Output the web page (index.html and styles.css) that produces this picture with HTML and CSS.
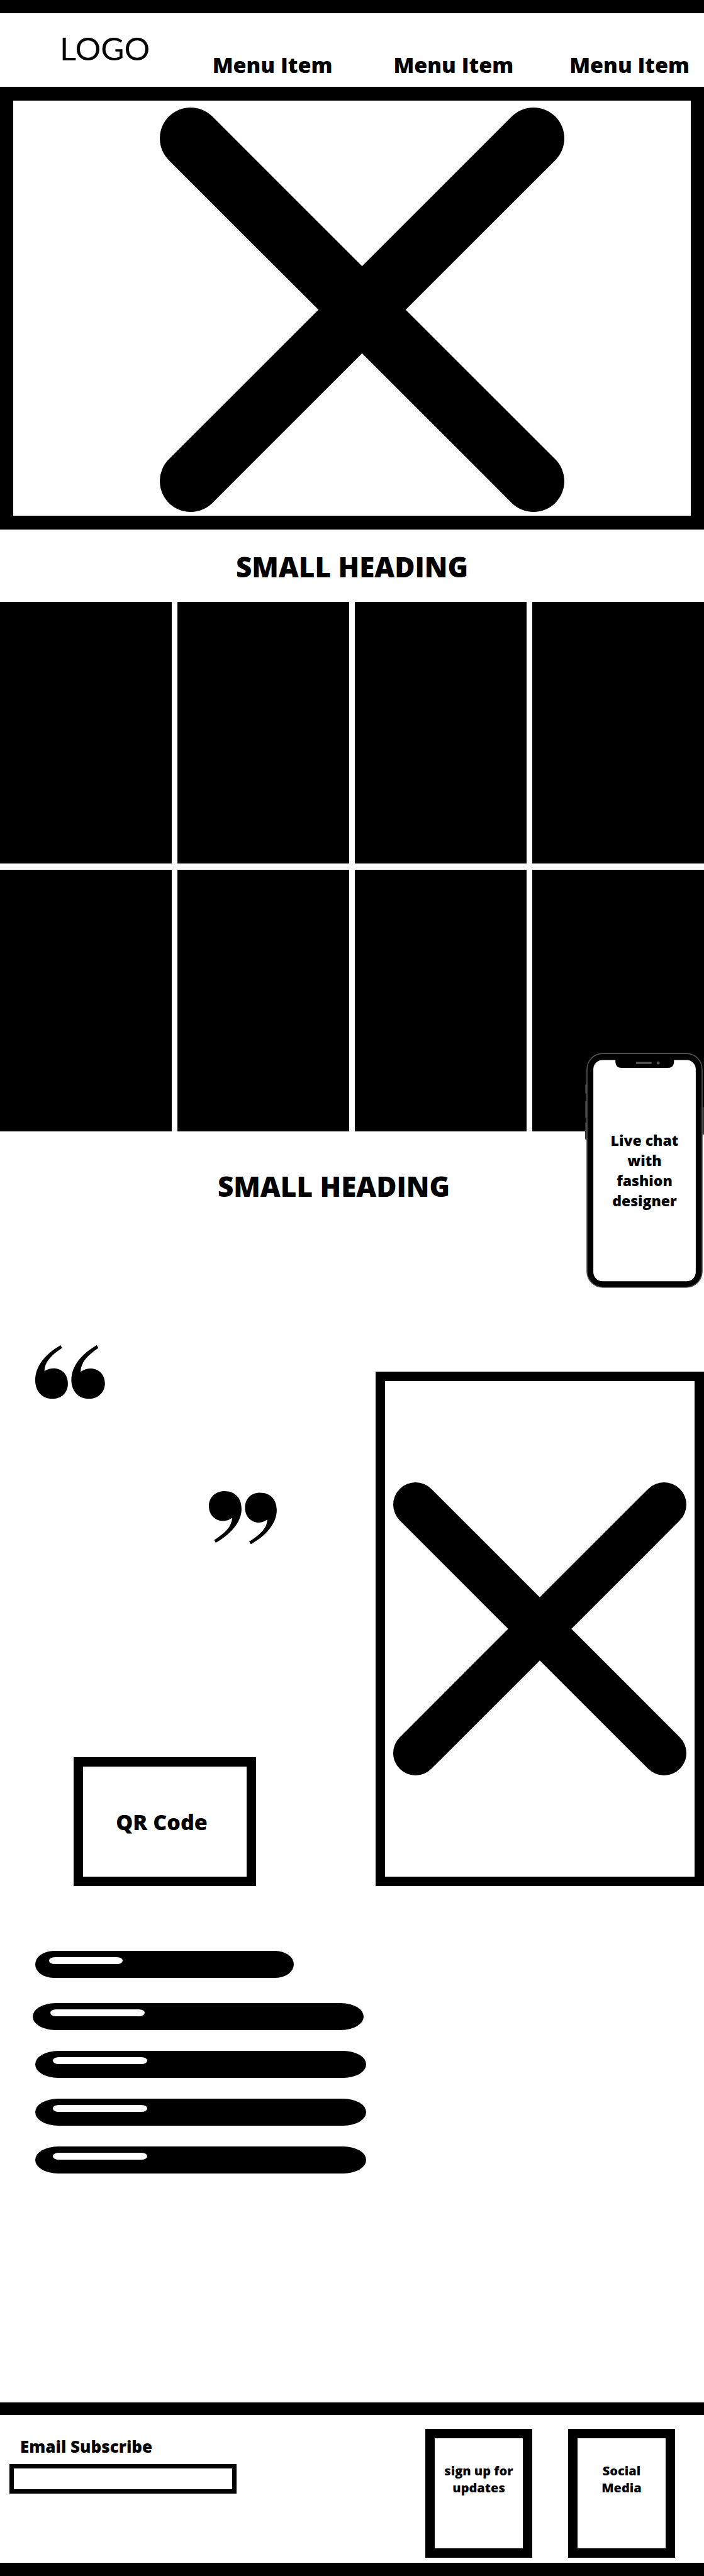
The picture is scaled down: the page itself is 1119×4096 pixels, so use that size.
FILE: index.html
```html
<!DOCTYPE html>
<html lang="en">
<head>
<meta charset="utf-8">
<meta name="viewport" content="width=device-width, initial-scale=1">
<title>Fashion store wireframe</title>
<link rel="stylesheet" href="styles.css">
</head>
<body>
<header class="site-header">
  <a class="logo" href="#">LOGO</a>
  <nav class="menu">
    <a class="menu-item" href="#">Menu Item</a>
    <a class="menu-item" href="#">Menu Item</a>
    <a class="menu-item" href="#">Menu Item</a>
  </nav>
</header>

<main>
  <section class="hero">
    <svg class="hero-cross" viewBox="0 0 643 643" role="img" aria-label="Hero image placeholder">
      <path d="M49 49 594 594M594 49 49 594" stroke="#000" stroke-width="98" stroke-linecap="round"/>
    </svg>
  </section>

  <h2 class="heading">SMALL HEADING</h2>

  <section class="gallery">
    <div class="tile"></div>
    <div class="tile"></div>
    <div class="tile"></div>
    <div class="tile"></div>
    <div class="tile"></div>
    <div class="tile"></div>
    <div class="tile"></div>
    <div class="tile"></div>
    <button class="chat" type="button">
      <svg class="chat-phone" viewBox="105 69 693 1369" aria-hidden="true">
        <g fill="#333">
          <rect x="105" y="252" width="14" height="54" rx="5"/>
          <rect x="105" y="349" width="14" height="100" rx="5"/>
          <rect x="105" y="474" width="14" height="100" rx="5"/>
          <rect x="784" y="384" width="14" height="162" rx="5"/>
        </g>
        <rect x="116" y="72" width="671" height="1363" rx="92" fill="#000" stroke="#555" stroke-width="6"/>
        <rect x="153" y="110" width="597" height="1290" rx="54" fill="#fff"/>
        <path d="M282 108H623V124Q620 156 588 156H317Q285 156 282 124Z" fill="#000"/>
        <rect x="402" y="121" width="91" height="12" rx="3" fill="#555"/>
        <circle cx="531" cy="127" r="9" fill="#555"/>
      </svg>
      <span class="chat-text">Live chat with fashion designer</span>
    </button>
  </section>

  <h2 class="heading heading-second">SMALL HEADING</h2>

  <section class="story">
    <div class="story-side">
      <svg class="quote quote-open" viewBox="0 0 111 85" aria-hidden="true">
        <g transform="scale(.3657 .2731) translate(-154 -93)">
          <path d="M264 93 271 109C222 152 194 194 194 243C242 205 296 239 296 315C296 370 267 405 228 405C184 405 154 359 154 297C154 213 199 144 264 93Z"/>
          <path d="M421 93 429 109C380 152 352 196 351 248C400 203 457 242 457 315C457 367 427 405 386 405C343 405 311 359 311 297C311 213 356 144 421 93Z"/>
        </g>
      </svg>
      <svg class="quote quote-close" viewBox="0 0 108 84" aria-hidden="true">
        <g transform="scale(.3657 .2731) translate(-909 -942)">
          <path d="M939 1242 932 1227C985 1182 1009 1144 1010 1098C968 1140 909 1104 909 1030C909 979 937 942 977 942C1023 942 1051 982 1051 1046C1051 1121 1005 1192 939 1242Z"/>
          <path d="M1092 1251 1084 1236C1138 1191 1162 1153 1163 1108C1121 1150 1066 1111 1066 1040C1066 987 1091 951 1131 951C1176 951 1204 991 1204 1053C1204 1130 1158 1201 1092 1251Z"/>
        </g>
      </svg>
      <div class="frame qr">QR Code</div>
    </div>
    <div class="frame photo">
      <svg class="photo-cross" viewBox="0 0 466 466" role="img" aria-label="Photo placeholder">
        <path d="M35.5 35.5 430.5 430.5M430.5 35.5 35.5 430.5" stroke="#000" stroke-width="71" stroke-linecap="round"/>
      </svg>
    </div>
  </section>

  <ul class="lines">
    <li class="line line-short"></li>
    <li class="line line-wide"></li>
    <li class="line"></li>
    <li class="line"></li>
    <li class="line"></li>
  </ul>
</main>

<footer class="site-footer">
  <form class="subscribe">
    <label class="subscribe-label" for="email">Email Subscribe</label>
    <input class="subscribe-input" id="email" type="email">
  </form>
  <div class="footer-boxes">
    <button class="frame footer-box" type="button">sign up for updates</button>
    <a class="frame footer-box" href="#">Social<br>Media</a>
  </div>
</footer>
</body>
</html>
```
FILE: styles.css
```css
* {
  box-sizing: border-box;
}

body {
  margin: 0;
  background: #fff;
  color: #000;
  font-family: "Open Sans", "Noto Sans", sans-serif;
  font-weight: 800;
}

a {
  color: inherit;
  text-decoration: none;
}

button,
input {
  margin: 0;
  background: none;
  color: inherit;
  font: inherit;
}

svg {
  display: block;
}

.site-header {
  display: flex;
  align-items: flex-end;
  justify-content: space-between;
  border-top: 21px solid #000;
  padding: 26px 23px 11px 95px;
}

.logo {
  margin-bottom: 20px;
  font-family: Lato, sans-serif;
  font-size: 51px;
  font-weight: 400;
  line-height: 60px;
}

.menu {
  display: flex;
  gap: 89px;
}

.menu-item {
  font-size: 34px;
  line-height: 48px;
}

.menu-item:first-child {
  margin-right: 8px;
}

.hero {
  display: flex;
  justify-content: center;
  border: solid #000;
  border-width: 22px 21px;
  padding: 11px 0 6px 32px;
}

.hero-cross {
  width: 62%;
  max-width: 643px;
}

.heading {
  margin: 0;
  padding: 29px 0 26px;
  font-size: 44px;
  font-weight: 800;
  line-height: 60px;
  text-align: center;
}

.heading-second {
  padding: 57px 58px 0 0;
}

.gallery {
  position: relative;
  display: grid;
  grid-template-columns: repeat(4, 1fr);
  gap: 10px 9px;
}

.tile {
  height: 416px;
  background: #000;
}

.chat {
  position: absolute;
  right: 0;
  bottom: -249px;
  display: grid;
  place-items: center;
  border: 0;
  padding: 0;
}

.chat-phone {
  grid-area: 1 / 1;
  width: 189px;
  height: 374px;
}

.chat-text {
  grid-area: 1 / 1;
  width: 120px;
  font-size: 23px;
  line-height: 32px;
}

.story {
  display: grid;
  grid-template-columns: 597fr 522fr;
  padding-top: 223px;
}

.story-side {
  display: flex;
  flex-direction: column;
  align-items: flex-start;
}

.quote-open {
  width: 111px;
  margin-left: 56px;
}

.quote-close {
  width: 108px;
  margin: 147px 0 0 332px;
}

.frame {
  border: 15px solid #000;
}

.qr {
  display: flex;
  align-items: center;
  justify-content: center;
  width: 290px;
  height: 205px;
  margin: 339px 0 0 117px;
  padding-right: 10px;
  font-size: 34px;
  line-height: 48px;
}

.photo {
  display: flex;
  align-items: center;
  justify-content: center;
  margin-top: 42px;
}

.photo-cross {
  width: 95%;
  max-width: 466px;
}

.lines {
  display: flex;
  flex-direction: column;
  gap: 33px;
  margin: 0;
  padding: 103px 56px 364px;
  list-style: none;
}

.line {
  width: 526px;
  height: 43px;
  border-radius: 37px / 22px;
  padding: 10px 28px;
  background: #000;
}

.line::before {
  content: "";
  display: block;
  width: 150px;
  height: 11px;
  border-radius: 10px / 6px;
  background: #fff;
}

.line-short {
  width: 411px;
  margin-bottom: 7px;
  border-radius: 30px / 22px;
  padding: 10px 22px;
}

.line-short::before {
  width: 117px;
}

.line-wide {
  margin-left: -4px;
}

.site-footer {
  display: flex;
  justify-content: space-between;
  border: solid #000;
  border-width: 20px 0 21px;
  padding: 22px 46px 8px 15px;
}

.subscribe {
  display: flex;
  flex-direction: column;
  gap: 10px;
  width: 361px;
  padding-top: 10px;
}

.subscribe-label {
  padding-left: 17px;
  font-size: 26px;
  line-height: 36px;
}

.subscribe-input {
  width: 100%;
  height: 47px;
  border: 7px solid #000;
  border-radius: 0;
  padding: 0 8px;
  font-size: 20px;
}

.footer-boxes {
  display: flex;
  gap: 57px;
}

.footer-box {
  display: flex;
  align-items: flex-start;
  justify-content: center;
  width: 170px;
  height: 205px;
  padding: 38px 12px 0;
  font-size: 20px;
  line-height: 27px;
  text-align: center;
}
```
